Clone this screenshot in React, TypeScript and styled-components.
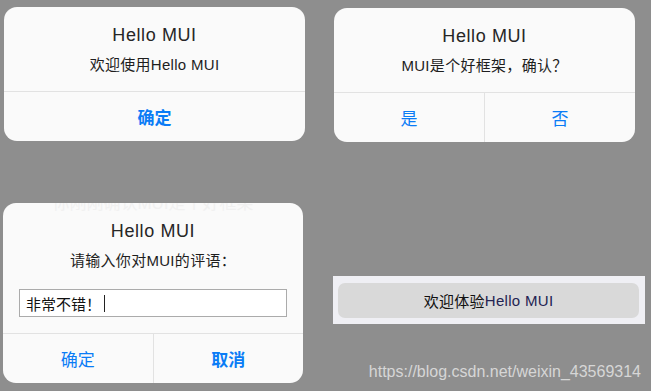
import React from 'react';
import styled, { createGlobalStyle } from 'styled-components';

const GlobalStyle = createGlobalStyle`
  html, body {
    margin: 0;
    padding: 0;
    background: #8e8e8e;
  }
  body {
    font-family: 'Liberation Sans', 'Noto Sans CJK SC', sans-serif;
  }
`;

const Page = styled.div`
  position: relative;
  width: 651px;
  height: 391px;
  padding-top: 7px;
  box-sizing: border-box;
  overflow: hidden;
`;

const Row = styled.div<{ $gap?: number }>`
  display: flex;
  align-items: flex-start;
  margin-top: ${(p) => p.$gap || 0}px;
`;

const Popup = styled.div<{ $left: number; $width: number; $top?: number }>`
  position: relative;
  margin-left: ${(p) => p.$left}px;
  margin-top: ${(p) => p.$top || 0}px;
  width: ${(p) => p.$width}px;
  background: #fafafa;
  border-radius: 13px;
  overflow: hidden;
`;

const PopupBody = styled.div`
  padding: 15px 16px 16px;
  text-align: center;
  border-bottom: 1px solid #e2e2e2;
`;

const Title = styled.div`
  font-size: 18px;
  line-height: 26px;
  letter-spacing: 0.6px;
  color: #262626;
`;

const Message = styled.div`
  margin-top: 7px;
  font-size: 15px;
  line-height: 20px;
  letter-spacing: 0.3px;
  color: #1e1e1e;
`;

const Field = styled.div`
  display: flex;
  align-items: center;
  margin-top: 18px;
  height: 28px;
  box-sizing: border-box;
  padding: 0 6px;
  border: 1px solid #ababab;
  background: #fff;
  font-size: 15px;
  color: #111;
  text-align: left;
`;

const Caret = styled.span`
  display: inline-block;
  width: 1px;
  height: 17px;
  margin-left: 3px;
  background: #222;
`;

const Buttons = styled.div`
  display: flex;
  height: 49px;
`;

const Button = styled.div<{ $bold?: boolean }>`
  flex: 1;
  display: flex;
  align-items: center;
  justify-content: center;
  font-size: 17px;
  font-weight: ${(p) => (p.$bold ? 700 : 400)};
  color: #0a7cf6;
  & + & {
    border-left: 1px solid #e2e2e2;
  }
`;

const Ghost = styled.div`
  position: absolute;
  top: -9px;
  left: 0;
  right: 0;
  text-align: center;
  font-size: 17px;
  line-height: 20px;
  color: #f1f1f1;
  pointer-events: none;
`;

const ToastBar = styled.div`
  margin-left: 30px;
  margin-top: 73px;
  width: 312px;
  box-sizing: border-box;
  padding: 7px 6px 6px 5px;
  background: #efeff4;
`;

const ToastPill = styled.div`
  height: 35px;
  border-radius: 7px;
  background: #d9d9d9;
  display: flex;
  align-items: center;
  justify-content: center;
  font-size: 15px;
  letter-spacing: 0.3px;
  color: #111;
`;

const Latin = styled.span`
  color: #232352;
`;

const Watermark = styled.div`
  position: absolute;
  right: 10px;
  bottom: 10px;
  font-size: 16px;
  color: #d6d6d6;
`;

export default function App() {
  return (
    <Page>
      <GlobalStyle />
      <Row>
        <Popup $left={4} $width={301}>
          <PopupBody>
            <Title>Hello MUI</Title>
            <Message>欢迎使用Hello MUI</Message>
          </PopupBody>
          <Buttons>
            <Button $bold>确定</Button>
          </Buttons>
        </Popup>
        <Popup $left={29} $width={301} $top={1}>
          <PopupBody>
            <Title>Hello MUI</Title>
            <Message>MUI是个好框架，确认？</Message>
          </PopupBody>
          <Buttons>
            <Button>是</Button>
            <Button>否</Button>
          </Buttons>
        </Popup>
      </Row>
      <Row $gap={61}>
        <Popup $left={3} $width={300}>
          <Ghost>你刚刚确认MUI是个好框架</Ghost>
          <PopupBody>
            <Title>Hello MUI</Title>
            <Message>请输入你对MUI的评语：</Message>
            <Field>
              非常不错！
              <Caret />
            </Field>
          </PopupBody>
          <Buttons>
            <Button>确定</Button>
            <Button $bold>取消</Button>
          </Buttons>
        </Popup>
        <ToastBar>
          <ToastPill>
            欢迎体验<Latin>Hello MUI</Latin>
          </ToastPill>
        </ToastBar>
      </Row>
      <Watermark>https://blog.csdn.net/weixin_43569314</Watermark>
    </Page>
  );
}
